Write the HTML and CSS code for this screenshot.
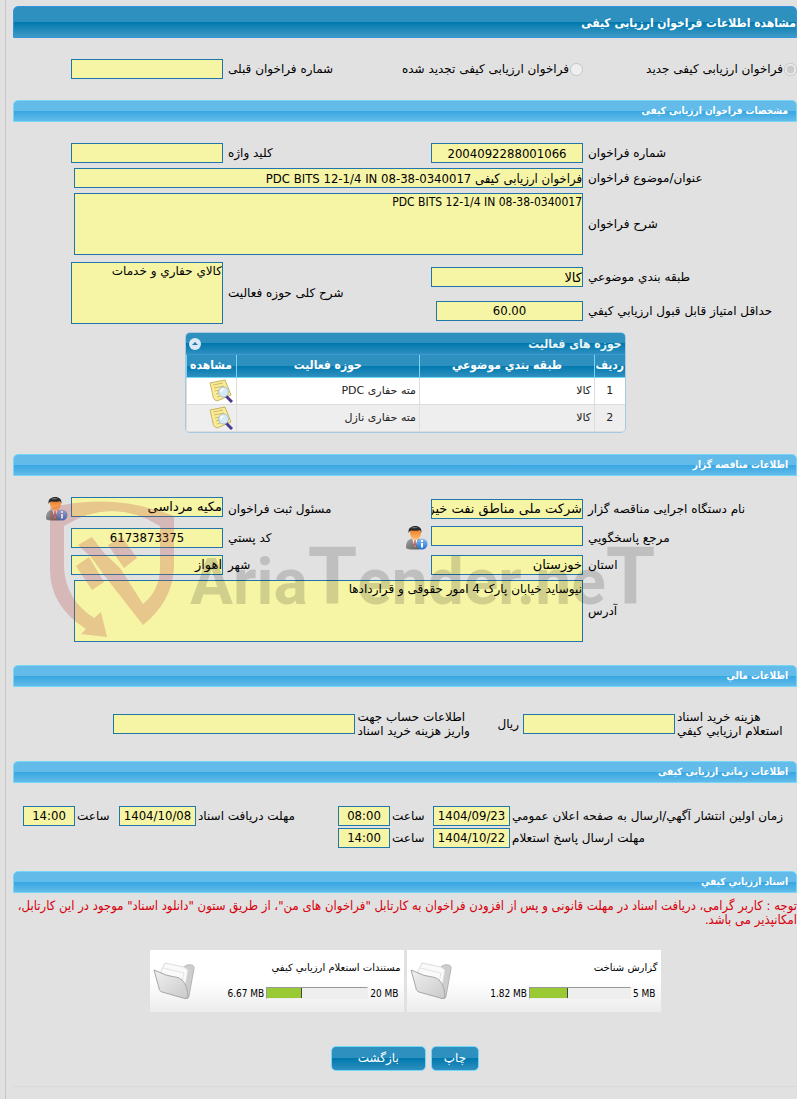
FILE: index.html
```html
<!DOCTYPE html>
<html lang="fa" dir="rtl">
<head>
  <meta charset="UTF-8">
  <meta name="viewport" content="width=device-width, initial-scale=1.0">
  <title>مشاهده اطلاعات فراخوان ارزیابی کیفی</title>
  <link rel="stylesheet" href="styles.css">
</head>
<body>

  <!-- Shared icons -->
  <svg class="sprite" aria-hidden="true">
    <defs>
      <linearGradient id="blueDot" x1="0" y1="0" x2="0" y2="1">
        <stop offset="0" stop-color="#8fc0ee"/>
        <stop offset="1" stop-color="#1c6fd0"/>
      </linearGradient>
      <linearGradient id="suit" x1="0" y1="0" x2="1" y2="1">
        <stop offset="0" stop-color="#a3a3a3"/>
        <stop offset="1" stop-color="#565656"/>
      </linearGradient>
      <linearGradient id="skin" x1="0" y1="0" x2="0" y2="1">
        <stop offset="0" stop-color="#f07a22"/>
        <stop offset="1" stop-color="#ffc27a"/>
      </linearGradient>
      <linearGradient id="folderFront" x1="0" y1="0" x2="1" y2="1">
        <stop offset="0" stop-color="#f0f0f0"/>
        <stop offset="1" stop-color="#cacaca"/>
      </linearGradient>
      <symbol id="person" viewBox="0 0 22 24">
        <path d="M0 21c0-6 3-8 7-8.500h4c4 .5 6 3 6 8.500 0 2-2 2.500-8.500 2.500S0 23 0 21z" fill="url(#suit)"/>
        <path d="M6 12.500l3 9 3-9z" fill="#f4f4f4"/>
        <path d="M8.500 14h1l.5 5-1 2-1-2z" fill="#b55"/>
        <path d="M4 6c0 5 2.500 8 5.500 8S15 11 15 6c0-3-11-3-11 0z" fill="url(#skin)"/>
        <path d="M2.500 7C2 2 5 0 9.500 0 13 0 16 2 15.500 7c-.5-2-1-2.500-2-2.700-3 .9-6 .5-8 .2C3.500 5 3 6 2.500 7z" fill="#2b2b2b"/>
        <path d="M5 2c2-1.200 5-1.200 7-.3-2 .6-4.500 1-7 .3z" fill="#777"/>
        <circle cx="16" cy="18" r="5.500" fill="url(#blueDot)"/>
        <rect x="15" y="17" width="2" height="4.500" fill="#fff"/>
        <rect x="15" y="14" width="2" height="2" fill="#fff"/>
      </symbol>
      <symbol id="preview" viewBox="0 0 24 24">
        <path d="M1 4l15-3 6 15-14 6c-3-1-4-3-4-5-1-5-2-9-3-13z" fill="#f8ec9a" stroke="#c9b35e"/>
        <path d="M4 6l10-2M5 9l10-2M6 12l5-1M7 15l3-1M8 18l3-1" stroke="#d1bb5c" fill="none"/>
        <path d="M17 17l6 6" stroke="#4b3a8c" stroke-width="3"/>
        <circle cx="14.500" cy="13" r="5" fill="#d6eaf5" stroke="#a9bfd0"/>
        <path d="M12 13c0-2 1-3 2.500-3" stroke="#fff" stroke-width="1.500" fill="none"/>
      </symbol>
      <symbol id="folder" viewBox="0 0 42 38">
        <path d="M31 5c2-2 5-3 9-1.500 1 1 1 2 1 3L36 34c0 2-2 3-4 2z" fill="#cdcdcd" stroke="#b5b5b5"/>
        <path d="M8 9l4-8 19 4 4 3-4 22-22-6z" fill="#fafafa" stroke="#dcdcdc"/>
        <path d="M10 6l21 5-3 14" fill="none" stroke="#e4e4e4"/>
        <path d="M1 8c6 2 10 5 16 6 5 1 9 1 12 4 4 4 6 10 6 18l-3 .5L9 30c-2-1-3-2-3-4z" fill="url(#folderFront)" stroke="#a6a6a6"/>
      </symbol>
    </defs>
  </svg>

  <main class="page">
    <h1 class="title-bar">مشاهده اطلاعات فراخوان ارزیابی کیفی</h1>

    <form>
      <div class="form-grid type-row">
        <div class="option">
          <input type="radio" name="type" id="typeNew" checked disabled>
          <label for="typeNew">فراخوان ارزیابی کیفی جدید</label>
        </div>
        <div class="option">
          <input type="radio" name="type" id="typeRenewed" disabled>
          <label for="typeRenewed">فراخوان ارزیابی کیفی تجدید شده</label>
        </div>
        <label for="prevNumber">شماره فراخوان قبلی</label>
        <input type="text" id="prevNumber" readonly>
      </div>

      <h2 class="section-bar">مشخصات فراخوان ارزیابی کیفی</h2>

      <div class="form-grid">
        <label for="number">شماره فراخوان</label>
        <input type="text" id="number" class="latin centered" value="2004092288001066" readonly>
        <label for="keyword">کلید واژه</label>
        <input type="text" id="keyword" readonly>

        <label for="subject">عنوان/موضوع فراخوان</label>
        <input type="text" id="subject" class="latin wide" value="فراخوان ارزیابی کیفی PDC BITS 12-1/4 IN 08-38-0340017" readonly>

        <label for="description">شرح فراخوان</label>
        <textarea id="description" class="latin wide" readonly>PDC BITS 12-1/4 IN 08-38-0340017</textarea>
      </div>

      <div class="form-grid category-grid">
        <label for="category">طبقه بندي موضوعي</label>
        <input type="text" id="category" value="کالا" readonly>
        <label for="activity" class="activity-label">شرح کلی حوزه فعالیت</label>
        <textarea id="activity" class="activity-text" readonly>کالاي حفاري و خدمات</textarea>

        <label for="minScore">حداقل امتیاز قابل قبول ارزیابي کیفي</label>
        <input type="text" id="minScore" class="latin centered score" value="60.00" readonly>
      </div>

      <div class="panel">
        <div class="panel-title">
          <span>حوزه های فعالیت</span>
          <button type="button" class="collapse" aria-label="بستن">
            <svg viewBox="0 0 12 12"><circle cx="6" cy="6" r="6" fill="#dce9f5"/><path d="M3 7l3-3 3 3z" fill="#1c7ab3"/></svg>
          </button>
        </div>
        <table>
          <thead>
            <tr>
              <th class="col-row">ردیف</th>
              <th class="col-category">طبقه بندي موضوعي</th>
              <th>حوزه فعالیت</th>
              <th class="col-view">مشاهده</th>
            </tr>
          </thead>
          <tbody>
            <tr>
              <td class="col-row">1</td>
              <td>کالا</td>
              <td>مته حفاری PDC</td>
              <td class="col-view"><svg class="preview-icon"><use href="#preview"/></svg></td>
            </tr>
            <tr>
              <td class="col-row">2</td>
              <td>کالا</td>
              <td>مته حفاری نازل</td>
              <td class="col-view"><svg class="preview-icon"><use href="#preview"/></svg></td>
            </tr>
          </tbody>
        </table>
      </div>

      <h2 class="section-bar">اطلاعات مناقصه گزار</h2>

      <div class="form-grid owner-grid">
        <label for="org">نام دستگاه اجرایی مناقصه گزار</label>
        <input type="text" id="org" value="شرکت ملی مناطق نفت خیز جنوب" readonly>
        <label for="registrar">مسئول ثبت فراخوان</label>
        <div class="person-field">
          <input type="text" id="registrar" value="مکیه مرداسی" readonly>
          <svg class="person-icon"><use href="#person"/></svg>
        </div>

        <label for="contact">مرجع پاسخگويي</label>
        <div class="person-field">
          <input type="text" id="contact" readonly>
          <svg class="person-icon"><use href="#person"/></svg>
        </div>
        <label for="postcode">کد پستي</label>
        <input type="text" id="postcode" class="latin centered" value="6173873375" readonly>

        <label for="province">استان</label>
        <input type="text" id="province" value="خوزستان" readonly>
        <label for="city">شهر</label>
        <input type="text" id="city" value="اهواز" readonly>

        <label for="address">آدرس</label>
        <textarea id="address" class="wide" readonly>نیوساید خیابان پارک 4 امور حقوقی و قراردادها</textarea>

        <div class="watermark">
          <svg viewBox="0 0 126 154">
            <path d="M0 8Q62-8 124 16V68Q122 102 93 125L54 75 41 57 28 45 42 37 54 53 70 68 93 104Q110 90 110 68V26Q62-4 14 26V68Q16 100 44 118L51 112 57 137 31 134 36 129Q0 106 0 70z"/>
            <path d="M26 66l13-9 15 25-12 8zM58 45l14-8 15 21-13 10z"/>
          </svg>
          <span class="watermark-text" dir="ltr">Aria<span class="cap">T</span>ender.ne<span class="cap">T</span></span>
        </div>
      </div>

      <h2 class="section-bar">اطلاعات مالي</h2>

      <div class="finance-row">
        <label for="docPrice" class="price-label">هزينه خريد اسناد<br>استعلام ارزيابي کيفي</label>
        <input type="text" id="docPrice" readonly>
        <span>ریال</span>
        <label for="account" class="account-label">اطلاعات حساب جهت<br>واریز هزینه خرید اسناد</label>
        <input type="text" id="account" class="account" readonly>
      </div>

      <h2 class="section-bar">اطلاعات زمانی ارزیابی کیفی</h2>

      <div class="date-grid">
        <label for="publishDate">زمان اولین انتشار آگهي/ارسال به صفحه اعلان عمومي</label>
        <input type="text" id="publishDate" class="latin" value="1404/09/23" readonly>
        <label for="publishTime">ساعت</label>
        <input type="text" id="publishTime" class="latin" value="08:00" readonly>
        <label for="receiveDate">مهلت دریافت اسناد</label>
        <input type="text" id="receiveDate" class="latin" value="1404/10/08" readonly>
        <label for="receiveTime">ساعت</label>
        <input type="text" id="receiveTime" class="latin" value="14:00" readonly>

        <label for="replyDate">مهلت ارسال پاسخ استعلام</label>
        <input type="text" id="replyDate" class="latin" value="1404/10/22" readonly>
        <label for="replyTime">ساعت</label>
        <input type="text" id="replyTime" class="latin" value="14:00" readonly>
      </div>

      <h2 class="section-bar">اسناد ارزيابي کيفي</h2>

      <p class="notice">توجه : کاربر گرامی، دریافت اسناد در مهلت قانونی و پس از افزودن فراخوان به کارتابل "فراخوان های من"، از طریق ستون "دانلود اسناد" موجود در این کارتابل، امکانپذیر می باشد.</p>

      <div class="files">
        <div class="file">
          <div class="file-info">
            <div class="file-name">گزارش شناخت</div>
            <div class="usage latin" dir="ltr">
              <span>1.82 MB</span>
              <div class="gauge"><div class="gauge-fill" style="width: 38%"></div></div>
              <span>5 MB</span>
            </div>
          </div>
          <svg class="folder-icon"><use href="#folder"/></svg>
        </div>
        <div class="file">
          <div class="file-info">
            <div class="file-name">مستندات استعلام ارزيابي کيفي</div>
            <div class="usage latin" dir="ltr">
              <span>6.67 MB</span>
              <div class="gauge"><div class="gauge-fill" style="width: 35%"></div></div>
              <span>20 MB</span>
            </div>
          </div>
          <svg class="folder-icon"><use href="#folder"/></svg>
        </div>
      </div>

      <div class="buttons">
        <button type="button" class="btn">چاپ</button>
        <button type="button" class="btn btn-back">بازگشت</button>
      </div>
    </form>
  </main>

</body>
</html>
```

FILE: styles.css
```css
* {
  box-sizing: border-box;
}

body {
  margin: 0;
  background: #e1e1e1;
  color: #000;
  font-family: "DejaVu Sans", sans-serif;
  font-size: 12px;
  line-height: 14px;
}

.sprite {
  position: absolute;
  width: 0;
  height: 0;
}

.page {
  min-height: 100vh;
  margin-left: 5px;
  padding: 6px 0 12px 7px;
  border-left: 1px solid #c6c6c6;
}

form {
  padding-bottom: 15px;
  border-bottom: 1px solid #d9d9d9;
}

/* Bars */
.title-bar,
.section-bar,
.panel-title,
.notice,
th {
  font-family: "DejaVu Sans Condensed", "DejaVu Sans", sans-serif;
}

.title-bar {
  height: 32px;
  margin: 0;
  border: 1px solid #3394dd;
  border-radius: 5px 5px 0 0;
  background: linear-gradient(#2e90bf 50%, #0078ae 50%, #3f9ac6);
  color: #fff;
  font-size: 12px;
  line-height: 32px;
}

.section-bar {
  height: 22px;
  margin: 0;
  padding-right: 8px;
  border: 1px solid #77d5f7;
  border-radius: 5px 5px 0 0;
  background: linear-gradient(#62bbe9 50%, #37a6e1 50%, #62bbe9);
  color: #fff;
  font-size: 10px;
  line-height: 20px;
}

/* Fields */
input[type="text"],
textarea {
  width: 100%;
  height: 20px;
  margin: 0;
  padding: 0;
  border: 1px solid #1f77a9;
  background: #f6f4a5;
  color: #000;
  font-family: inherit;
  font-size: 13px;
}

textarea {
  display: block;
  height: 62px;
  padding: 1px 0;
  resize: none;
  overflow: hidden;
}

form textarea {
  font-size: 12px;
}

form .latin {
  font-family: "DejaVu Sans Condensed", "DejaVu Sans", sans-serif;
}

input[type="radio"] {
  width: 13px;
  height: 13px;
  margin: 0;
}

.centered {
  text-align: center;
}

.form-grid {
  position: relative;
  display: grid;
  grid-template-columns: 1fr 152px 198px 152px;
  gap: 5px;
  align-items: center;
  margin-top: 21px;
  padding-left: 58px;
}

.form-grid > label {
  text-align: left;
  white-space: nowrap;
}

.form-grid .wide {
  grid-column: 2 / 5;
  width: calc(100% - 3px);
}

.type-row {
  margin-bottom: 21px;
}

.option {
  display: flex;
  align-items: center;
  gap: 1px;
  white-space: nowrap;
}

.category-grid {
  grid-template-rows: 30px 27px;
  margin-top: 7px;
}

.activity-label {
  grid-row: 1 / 3;
  grid-column: 3;
}

.activity-text {
  grid-row: 1 / 3;
  grid-column: 4;
}

.form-grid .score {
  width: 147px;
}

.owner-grid {
  grid-template-rows: 24px 24px 20px 62px;
  margin-bottom: 23px;
}

.person-field {
  display: flex;
  align-self: start;
  gap: 3px;
}

.person-field input,
.person-icon {
  flex-shrink: 0;
}

.person-icon {
  width: 22px;
  height: 24px;
}

/* Activity table */
.panel {
  width: 441px;
  max-width: 100%;
  margin: 8px auto 21px;
  border: 1px solid #a6c9e2;
  border-radius: 5px;
  overflow: hidden;
}

.panel-title {
  display: flex;
  justify-content: space-between;
  align-items: center;
  height: 22px;
  padding: 0 3px;
  border-bottom: 1px solid #4297d7;
  background: linear-gradient(#2e90bf 50%, #0078ae 50%, #2e90bf);
  color: #eaf5f7;
  font-weight: bold;
}

.collapse {
  width: 12px;
  height: 12px;
  padding: 0;
  border: 0;
  background: none;
}

.collapse svg {
  display: block;
}

table {
  width: 100%;
  border-collapse: collapse;
  table-layout: fixed;
}

th {
  height: 22px;
  padding: 0 0 2px;
  border-left: 1px solid #77d5f7;
  border-bottom: 1px solid #77d5f7;
  background: linear-gradient(#2e90bf 50%, #0078ae 50%, #2e90bf);
  color: #fff;
}

td {
  height: 27px;
  padding: 0 3px;
  border-left: 1px solid #ddd;
  border-bottom: 1px solid #ddd;
  background: #fff;
  color: #222;
  font-size: 11px;
}

tr:nth-child(even) td {
  background: #eee;
}

th.col-row {
  width: 30px;
}

td.col-row {
  text-align: center;
}

.col-category {
  width: 175px;
}

.col-view {
  width: 50px;
}

.preview-icon {
  display: block;
  width: 24px;
  height: 24px;
}

/* Logo over the owner section */
.watermark {
  position: absolute;
  top: 3px;
  left: 37px;
  display: flex;
  flex-direction: row-reverse;
  gap: 14px;
  pointer-events: none;
}

.watermark svg {
  width: 126px;
  height: 154px;
  fill: rgba(189, 65, 65, 0.25);
}

.watermark-text {
  color: rgba(0, 0, 0, 0.15);
  font-family: Roboto, sans-serif;
  font-size: 64px;
  font-weight: bold;
  line-height: 154px;
}

.watermark .cap {
  font-size: 80px;
}

/* Finance */
.finance-row {
  display: flex;
  align-items: center;
  gap: 2px;
  margin: 23px 0;
  white-space: nowrap;
}

.finance-row label {
  text-align: left;
}

.finance-row input {
  flex: none;
  width: 152px;
}

.finance-row span {
  padding-right: 2px;
}

.finance-row .account {
  width: 242px;
}

.price-label {
  width: 120px;
}

.account-label {
  width: 138px;
}

/* Dates */
.date-grid {
  display: grid;
  grid-template-columns: 1fr 77px 43px 52px 142px 77px 44px 52px;
  row-gap: 2px;
  align-items: center;
  margin: 23px 0;
  padding-left: 10px;
}

.date-grid label {
  padding-left: 2px;
  text-align: left;
  white-space: nowrap;
}

.date-grid input {
  text-align: center;
}

.notice {
  margin: 6px 0 23px;
  color: #d8000c;
  font-size: 13px;
}

/* Files */
.files {
  display: flex;
  justify-content: center;
  gap: 3px;
}

.file {
  display: flex;
  justify-content: space-between;
  align-items: center;
  width: 254px;
  height: 62px;
  padding: 0 3px;
  background: linear-gradient(#fff 50%, #ececec);
  font-size: 10px;
}

.file-info {
  display: grid;
  gap: 12px;
}

.usage {
  display: flex;
  justify-content: flex-end;
  gap: 2px;
  padding-right: 2px;
}

.gauge {
  width: 102px;
  height: 12px;
  border: 1px solid #eee;
  border-top-color: #999;
  border-left-color: #999;
  background: #eee;
}

.gauge-fill {
  height: 100%;
  border-right: 1px solid #444;
  background: #9aca33;
}

.folder-icon {
  width: 42px;
  height: 38px;
}

/* Buttons */
.buttons {
  display: flex;
  justify-content: center;
  gap: 5px;
  margin-top: 34px;
}

.btn {
  height: 25px;
  padding: 0 12px;
  border: 1px solid #77d5f7;
  border-radius: 5px;
  background: linear-gradient(#2e90bf 50%, #0078ae 50%, #2e90bf);
  color: #fff;
  font-family: inherit;
  font-size: 12px;
}

.btn-back {
  padding: 0 26px;
}

@media screen and (max-width: 700px) {
  .files {
    flex-wrap: wrap;
  }
}
```
